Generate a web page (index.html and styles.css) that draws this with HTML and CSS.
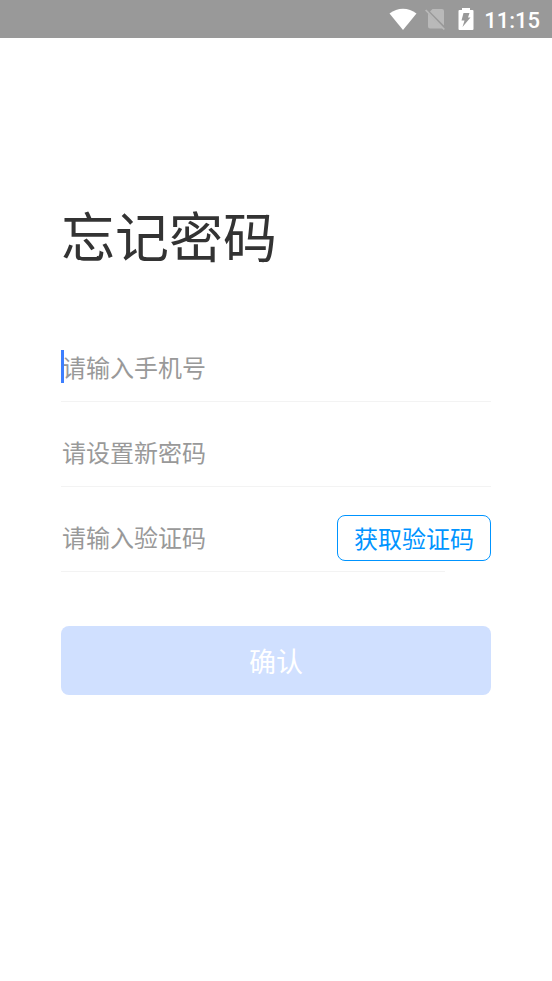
FILE: index.html
```html
<!DOCTYPE html>
<html lang="zh-CN">
<head>
<meta charset="utf-8">
<meta name="viewport" content="width=device-width, initial-scale=1">
<title>忘记密码</title>
<link rel="stylesheet" href="styles.css">
</head>
<body>
<header class="status">
  <svg class="wifi" viewBox="0 0 28 22" aria-hidden="true"><path d="M0.5 5.500C8.500-1 19.500-1 27.500 5.500L14 22Z" fill="#fff"/></svg>
  <svg class="sim" viewBox="0 0 20 24" aria-hidden="true"><path d="M7.500 2H17Q19 2 19 4V18.500L5 4.500Z M3 6.500L18 21.500H5Q3 21.500 3 19.500Z" fill="#b9b9b9"/><path d="M0.700 3L19.300 22.500" stroke="#b9b9b9" stroke-width="1.800"/></svg>
  <svg class="battery" viewBox="0 0 16 22" aria-hidden="true"><path d="M4 0H12V2H14.500Q15.500 2 15.500 3V21Q15.500 22 14.500 22H1.500Q0.500 22 0.500 21V3Q0.500 2 1.500 2H4Z" fill="#fff"/><path d="M5.500 5H11.500L10 9.500H12.500L4.500 19L6.500 12.500H3.500Z" fill="#999"/></svg>
  <time class="clock">11:15</time>
</header>
<main class="page">
  <h1 class="title">忘记密码</h1>
  <form class="form">
    <div class="row">
      <input class="field" type="tel" placeholder="请输入手机号" aria-label="手机号">
      <span class="caret" aria-hidden="true"></span>
    </div>
    <div class="row">
      <input class="field" type="password" placeholder="请设置新密码" aria-label="新密码">
    </div>
    <div class="row row-code">
      <input class="field" type="text" placeholder="请输入验证码" aria-label="验证码">
      <button class="code" type="button">获取验证码</button>
    </div>
    <button class="submit" type="submit">确认</button>
  </form>
</main>
</body>
</html>
```

FILE: styles.css
```css
* {
  box-sizing: border-box;
}

body {
  margin: 0;
  background: #fff;
  color: #333;
  font-family: "Noto Sans CJK SC", sans-serif;
}

.status {
  display: flex;
  align-items: center;
  justify-content: flex-end;
  height: 38px;
  padding-right: 12px;
  background: #999;
}

.wifi {
  width: 28px;
  height: 22px;
  margin-right: 8px;
}

.sim {
  width: 20px;
  height: 24px;
  margin-right: 13px;
}

.battery {
  width: 16px;
  height: 22px;
  margin-right: 10px;
}

.clock {
  padding-top: 3px;
  color: #fff;
  font: 500 22px/24px Roboto, sans-serif;
}

.page {
  padding: 158px 61px 0;
}

.title {
  margin: 0;
  font-size: 54px;
  font-weight: 400;
  line-height: 78px;
}

.form {
  margin-top: 43px;
}

.row {
  position: relative;
  display: flex;
  align-items: center;
  height: 85px;
  padding-top: 16px;
  background: linear-gradient(#f3f3f3, #f3f3f3) no-repeat left bottom / 100% 1px;
}

/* The divider stops short beneath the code button. */
.row-code {
  background-size: calc(100% - 46px) 1px;
}

.field {
  flex: 1;
  min-width: 0;
  height: 46px;
  padding: 0 0 2px 1px;
  border: 0;
  outline: 0;
  background: transparent;
  color: #333;
  font: inherit;
  font-size: 24px;
}

.field::placeholder {
  color: #999;
  opacity: 1;
}

.caret {
  position: absolute;
  left: 0;
  bottom: 19px;
  width: 3px;
  height: 33px;
  background: #3d7fff;
}

.code {
  height: 46px;
  padding: 0 16px;
  border: 1px solid #0094ff;
  border-radius: 8px;
  background: #fff;
  color: #0094ff;
  font: inherit;
  font-size: 24px;
}

.submit {
  display: block;
  width: 100%;
  height: 69px;
  margin-top: 54px;
  padding: 0;
  border: 0;
  border-radius: 8px;
  background: #d0e0ff;
  color: #fff;
  font: inherit;
  font-size: 27px;
}
```
